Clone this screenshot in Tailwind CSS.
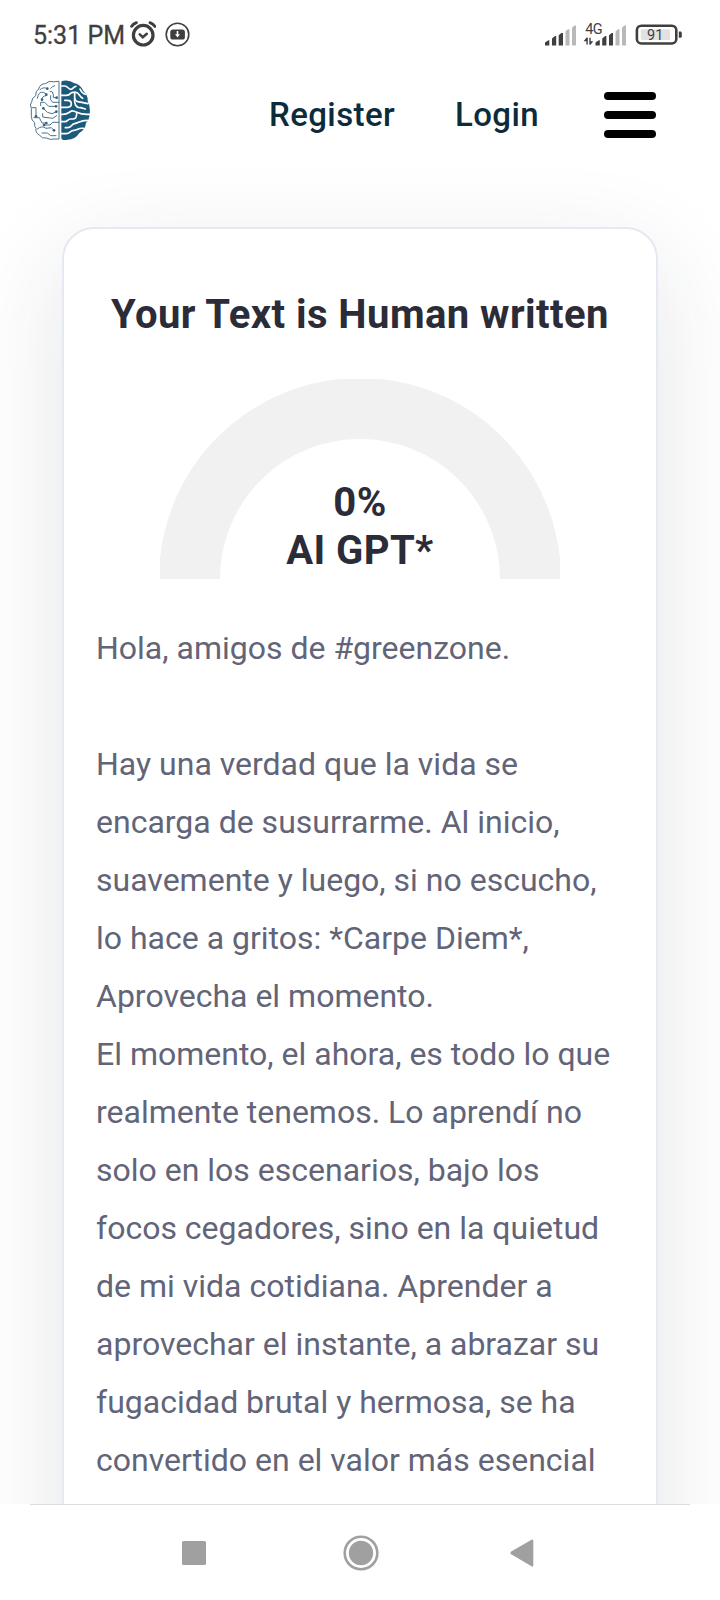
<!DOCTYPE html>
<html lang="es">

<head>
    <meta charset="UTF-8" />
    <meta name="viewport" content="width=device-width, initial-scale=1.0" />
    <title>AI Detector</title>
    <script src="https://cdn.jsdelivr.net/npm/@tailwindcss/browser@4"></script>
</head>

<body class="bg-white font-['Roboto',sans-serif]">
    <div class="w-[720px] h-[1600px] flex flex-col overflow-hidden">

        <!-- Status bar -->
        <div class="h-[68px] shrink-0 flex items-center justify-between pl-[33px] pr-[38px] text-[#3f3f3f]">
            <div class="flex items-center">
                <span class="text-[25px] leading-[28px] w-[97px] whitespace-nowrap pt-[3px] [-webkit-text-stroke:0.3px_#3f3f3f]">5:31 PM</span>
                <svg class="w-[26px] h-[26px]" viewBox="0 0 26 26" fill="none" stroke="#3f3f3f" stroke-linecap="round">
                    <circle cx="13.2" cy="14.2" r="9.8" stroke-width="3.2" />
                    <path d="M1.5 5.4Q3 3 6.4 1.6M25 5.4Q23.4 3 20 1.6" stroke-width="2.8" />
                    <path d="M9.8 13.4 12.8 16.2 16.8 12.8" stroke-width="2.6" />
                </svg>
                <svg class="w-[25px] h-[25px] ml-[9px]" viewBox="0 0 25 25">
                    <circle cx="12.5" cy="12.5" r="11.3" fill="none" stroke="#3f3f3f" stroke-width="1.6" />
                    <rect x="5.3" y="7.6" width="14.6" height="10" rx="2.6" fill="#3f3f3f" />
                    <path d="M11.7 9h1.6v3.2h1.7l-2.5 3.2-2.5-3.2h1.7z" fill="#fff" />
                </svg>
            </div>
            <svg class="w-[138px] h-[28px]" viewBox="0 0 138 28" fill="#3f3f3f">
                <path d="M1 25.5v-3l3.4-2.3h.9v5.3zM8 25.5v-7l3-2.4h1.2v9.4zM14.7 25.5V15.3l2.7-2.4H19v12.6z" />
                <path d="M21.5 25.5V11.5l2.4-2.2h1.6v16.2zM28 25.5V7.8l2.4-2.2h1.6v19.9z" fill="#b9b9b9" />
                <text x="41.2" y="13.6" font-size="14.5" textLength="17.5">4G</text>
                <path d="M39.6 21.2l3-3.6h1.2v7h-1.4v-3.4zM45.3 17.8h1.4v3.4h2.6l-2.8 3.6h-1.2z" />
                <path d="M51.5 25.5v-3l3.4-2.3h.9v5.3zM58.2 25.5v-7l3-2.4h1.2v9.4zM65 25.5V15.3l2.7-2.4H69v12.6z" />
                <path d="M71.5 25.5V11.5l2.4-2.2h1.6v16.2zM78 25.5V7.8l2.4-2.2h1.6v19.9z" fill="#b9b9b9" />
                <rect x="92.9" y="5.7" width="39.4" height="17.8" rx="4.5" fill="none" stroke="#3f3f3f" stroke-width="2.6" />
                <rect x="96.8" y="9.2" width="29.2" height="10.8" rx="1" fill="#e2e2e2" />
                <path d="M134.8 11.6h1.6q1.4 0 1.4 1.4v3.4q0 1.4-1.4 1.4h-1.6z" />
                <text x="103" y="19.8" font-size="14.5" textLength="16.5">91</text>
            </svg>
        </div>

        <!-- Header -->
        <header class="h-[102px] shrink-0 flex items-start pl-[30px] pr-[64px] text-[#0c2b3b]">
            <svg class="w-[60px] h-[60px] mt-[12px]" viewBox="30 29 180 180" fill="none" stroke-linecap="round" stroke-linejoin="round">
                <g stroke="#4b738b" stroke-width="3">
                    <path d="M117 34V206H102Q90 210 80 203 66 206 58 194 46 188 48 174 42 168 44 156 34 152 34 138V114Q28 104 35 94 36 82 47 76 46 62 56 56 60 40 76 40 86 30 100 34Z" />
                    <path d="M104 46Q96 48 92 54M60 58Q70 48 82 55M52 84Q56 62 70 66L80 72M66 88Q64 78 78 76M90 62Q100 62 100 74V82H110M117 96H98L92 88V76M108 108H86L74 96H62V106M36 112H48V138M70 114 82 126 96 130 110 124M68 130V140L98 144 110 136M42 142H58L66 158H80M117 156H98L90 164H72M52 176Q66 164 78 174L94 172 102 180M66 188H82L92 196H108" />
                </g>
                <g fill="#35617c">
                    <circle cx="82" cy="55" r="4" /><circle cx="110" cy="82" r="4" /><circle cx="70" cy="114" r="4" />
                    <circle cx="109" cy="124" r="4" /><circle cx="48" cy="138" r="4" /><circle cx="79" cy="158" r="4" />
                    <circle cx="102" cy="180" r="4" /><circle cx="66" cy="88" r="4" /><circle cx="108" cy="108" r="4" />
                    <circle cx="79" cy="73" r="4" /><circle cx="72" cy="164" r="4" />
                </g>
                <path fill="#1c5a7c" d="M124 36Q124 31 130 31 148 28 162 38 182 42 190 62 204 74 203 92 212 108 209 130 208 148 198 158 196 178 178 188 166 208 142 208 124 212 124 203Z" />
                <g stroke="#fff" stroke-width="5">
                    <path d="M124 47H134C144 47 144 57 152 57S160 48 168 48" />
                    <path d="M124 75H140C152 75 150 66 158 66H168C176 66 178 78 188 84" />
                    <path d="M134 90H142C158 90 158 111 142 111H124" />
                    <path d="M180 56C184 66 190 70 196 72" />
                    <path d="M164 66V84C164 96 180 94 204 100" />
                    <path d="M164 84C162 100 168 114 182 112L196 116" />
                    <path d="M124 132C148 134 148 120 160 122S176 134 208 132" />
                    <path d="M124 154H134C144 154 142 146 152 146H158C170 146 170 134 170 130" />
                    <path d="M136 172H142C156 172 152 162 164 160S180 150 202 150" />
                    <path d="M124 190H138C152 190 150 180 162 180S174 172 190 174" />
                </g>
            </svg>
            <nav class="ml-auto flex items-start pt-[24px]">
                <a class="text-[33px] leading-[46px] font-medium tracking-[0.4px] w-[186px]">Register</a>
                <a class="text-[33px] leading-[46px] font-medium tracking-[0.4px] w-[148px]">Login</a>
                <div class="w-[53px] pl-px flex flex-col gap-[11px]">
                    <span class="h-[8px] rounded-full bg-black"></span>
                    <span class="h-[8px] rounded-full bg-black"></span>
                    <span class="h-[8px] rounded-full bg-black"></span>
                </div>
            </nav>
        </header>

        <!-- Result -->
        <main class="h-[1334px] shrink-0 overflow-hidden px-[62px] pt-[57px]">
            <section class="h-[1600px] rounded-[32px] border-2 border-[#e6e8f2] bg-white px-8 pt-[62px] shadow-[0_30px_100px_rgba(32,44,70,0.12)]">
                <h1 class="text-center text-[40px] leading-[48px] font-bold tracking-[0.45px] text-[#2b2c38] whitespace-nowrap">Your Text is Human written</h1>
                <div class="mx-auto mt-[40px] w-[400px] h-[200px] grid">
                    <svg class="col-start-1 row-start-1 w-[400px] h-[200px]" viewBox="0 0 400 200">
                        <circle cx="200" cy="200" r="170.5" fill="none" stroke="#f1f1f1" stroke-width="61" />
                    </svg>
                    <div class="col-start-1 row-start-1 self-end pb-[4px] text-center text-[40px] leading-[48px] font-bold tracking-[0.4px] text-[#2b2c38]">
                        0%<br>AI GPT*
                    </div>
                </div>
                <p class="mt-[40px] text-[32px] leading-[58px] text-[#626478] whitespace-nowrap">
                    Hola, amigos de #greenzone.<br><br>
                    Hay una verdad que la vida se<br>
                    encarga de susurrarme. Al inicio,<br>
                    suavemente y luego, si no escucho,<br>
                    lo hace a gritos: *Carpe Diem*,<br>
                    Aprovecha el momento.<br>
                    El momento, el ahora, es todo lo que<br>
                    realmente tenemos. Lo aprendí no<br>
                    solo en los escenarios, bajo los<br>
                    focos cegadores, sino en la quietud<br>
                    de mi vida cotidiana. Aprender a<br>
                    aprovechar el instante, a abrazar su<br>
                    fugacidad brutal y hermosa, se ha<br>
                    convertido en el valor más esencial
                </p>
            </section>
        </main>

        <!-- Navigation bar -->
        <div class="h-[96px] shrink-0 bg-white px-[30px]">
            <div class="h-px bg-[#dcdde0]"></div>
            <div class="h-[95px] flex items-center pl-[152px]">
                <svg class="w-[24px] h-[24px]" viewBox="0 0 24 24"><rect width="24" height="24" rx="1.5" fill="#a0a0a0" /></svg>
                <svg class="w-[36px] h-[36px] ml-[137px]" viewBox="0 0 36 36">
                    <circle cx="18" cy="18" r="16.3" fill="none" stroke="#a0a0a0" stroke-width="2.6" />
                    <circle cx="18" cy="18" r="12.2" fill="#a0a0a0" />
                </svg>
                <svg class="w-[24px] h-[28px] ml-[131px]" viewBox="0 0 24 28"><path d="M1.2 12.6 21.5.8q1.8-.8 1.8 1v24.4q0 1.8-1.8 1L1.2 15.2q-1.6-1.3 0-2.6z" fill="#a0a0a0" /></svg>
            </div>
        </div>
    </div>
</body>

</html>
